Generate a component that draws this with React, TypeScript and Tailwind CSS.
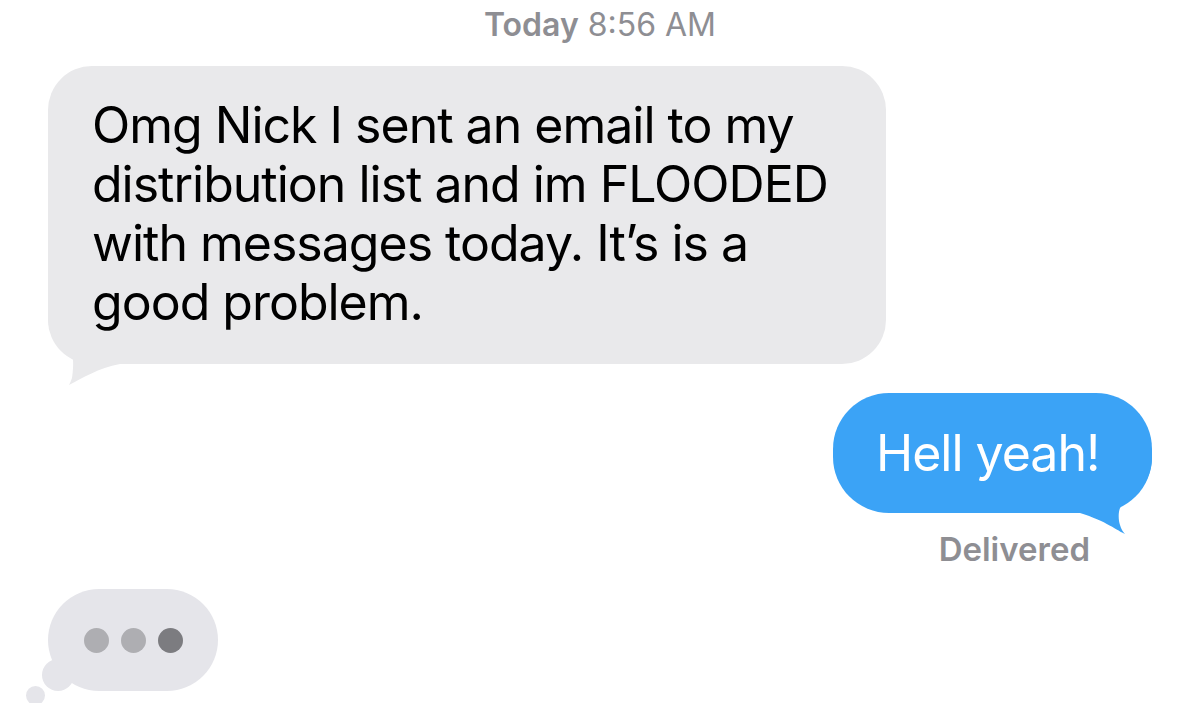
import React from 'react';

const font = { fontFamily: 'Inter, "Liberation Sans", sans-serif' };

const GrayTail: React.FC = () => (
  <svg className="absolute left-0 bottom-[-22px]" width="80" height="66" viewBox="0 0 80 66">
    <path d="M0,0 C0,12 10,24 24,33 C26,40 25,52 24,58 C23,61 22,63 21,65 C35,58 50,48 72,44 L72,0 Z" fill="#e9e9eb" />
  </svg>
);

const BlueTail: React.FC = () => (
  <svg className="absolute right-0 bottom-[-22px]" width="80" height="78" viewBox="0 0 80 78">
    <path d="M80,0 C80,25 62,42 50,48 C46,52 46,62 48,68 C49,72 51,75 53,77 C46,74 34,64 8,56 L8,0 Z" fill="#3ba3f6" />
  </svg>
);

const App: React.FC = () => {
  return (
    <div className="w-[1200px] h-[703px] bg-white overflow-hidden flex flex-col px-[48px]" style={font}>
      <div className="pt-[9px] text-center text-[32px] leading-[32px] text-[#8e8e93]">
        <span className="font-semibold">Today</span> 8:56 AM
      </div>

      <div className="relative mt-[25px] w-[838px] rounded-[44px] bg-[#e9e9eb] pl-[44px] pt-[30px] pb-[32px] text-[50px] leading-[59px] text-black tracking-[-1px]">
        <GrayTail />
        <div className="relative">
          Omg Nick I sent an email to my
          <br />
          distribution list and im FLOODED
          <br />
          with messages today. It’s is a
          <br />
          good problem.
        </div>
      </div>

      <div className="relative self-end mt-[29px] w-[319px] h-[120px] rounded-[56px] bg-[#3ba3f6] flex items-center pl-[43px] text-[50px] text-white tracking-[-1px]">
        <BlueTail />
        <span className="relative">Hell yeah!</span>
      </div>

      <div className="self-end mt-[20px] mr-[62px] text-[33px] leading-[33px] font-semibold text-[#8e8e93]">
        Delivered
      </div>

      <div className="relative mt-[23px] w-[170px] h-[102px]">
        <div className="absolute left-[-6px] top-[70px] w-[32px] h-[32px] rounded-full bg-[#e5e5ea]" />
        <div className="absolute left-[-22px] top-[97px] w-[19px] h-[19px] rounded-full bg-[#e5e5ea]" />
        <div className="relative w-full h-full rounded-full bg-[#e5e5ea] flex items-center justify-center gap-[12px]">
          <span className="w-[25px] h-[25px] rounded-full bg-[#aeaeb2]" />
          <span className="w-[25px] h-[25px] rounded-full bg-[#aeaeb2]" />
          <span className="w-[25px] h-[25px] rounded-full bg-[#7c7c80]" />
        </div>
      </div>
    </div>
  );
};

export default App;
